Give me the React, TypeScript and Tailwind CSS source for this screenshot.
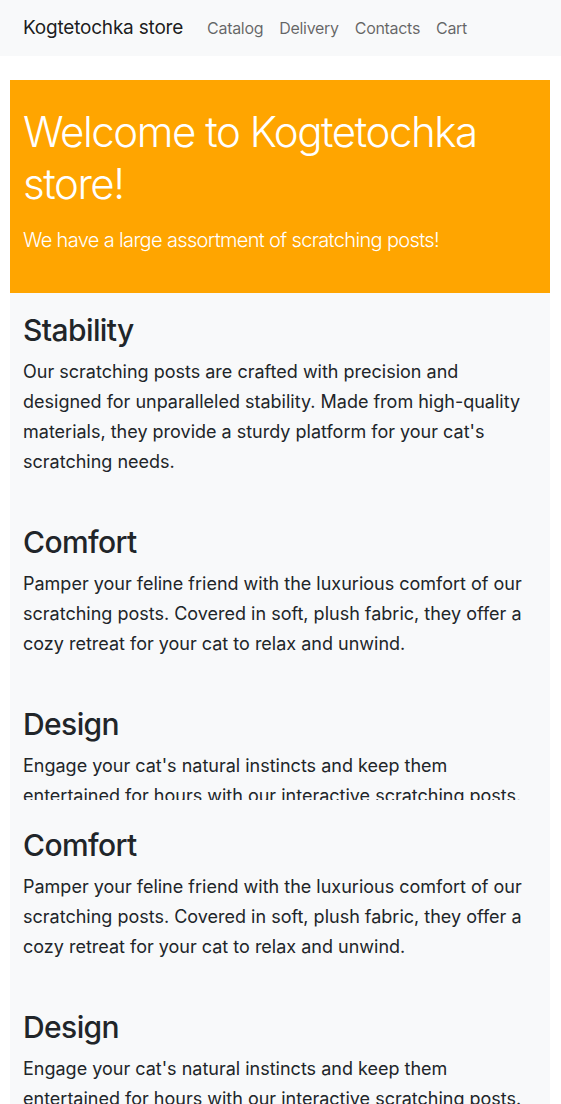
import React from 'react';

const sections = [
  {
    title: 'Stability',
    text: "Our scratching posts are crafted with precision and designed for unparalleled stability. Made from high-quality materials, they provide a sturdy platform for your cat's scratching needs.",
  },
  {
    title: 'Comfort',
    text: 'Pamper your feline friend with the luxurious comfort of our scratching posts. Covered in soft, plush fabric, they offer a cozy retreat for your cat to relax and unwind.',
  },
  {
    title: 'Design',
    text: "Engage your cat's natural instincts and keep them entertained for hours with our interactive scratching posts. Stylish designs blend seamlessly with any home decor.",
  },
];

function Feature({ title, text }: { title: string; text: string }) {
  return (
    <div className="mb-[47px]">
      <h2 className="mb-[9px] text-[30px] font-medium leading-[36px] tracking-[-0.6px] text-[#212529]">{title}</h2>
      <p className="text-[18px] leading-[30px] text-[#212529]">{text}</p>
    </div>
  );
}

export default function App() {
  return (
    <div className="min-h-screen bg-white font-['Inter',sans-serif]">
      {/* Navbar */}
      <nav className="flex h-14 items-center bg-[#f8f9fa] px-[23px]">
        <span className="mr-4 text-[19px] tracking-[-0.2px] text-black/90">Kogtetochka store</span>
        <div className="flex">
          <a href="#" className="px-2 text-[16px] tracking-[-0.3px] text-black/60">Catalog</a>
          <a href="#" className="px-2 text-[16px] tracking-[-0.3px] text-black/60">Delivery</a>
          <a href="#" className="px-2 text-[16px] tracking-[-0.3px] text-black/60">Contacts</a>
          <a href="#" className="px-2 text-[16px] tracking-[-0.3px] text-black/60">Cart</a>
        </div>
      </nav>

      <main className="mx-[10px] mt-6 w-[540px]">
        {/* Jumbotron */}
        <div className="bg-[#ffa500] px-[13px] pb-[22px] pt-[26px] text-white">
          <h1 className="mb-4 text-[42px] font-light leading-[51.6px] tracking-[-1.45px]">Welcome to Kogtetochka store!</h1>
          <p className="mb-4 text-[20px] font-light leading-[30px] tracking-[-0.65px]">We have a large assortment of scratching posts!</p>
        </div>

        {/* Features, first scroller */}
        <div className="h-[507px] overflow-hidden bg-[#f8f9fa] px-[13px] pt-[19px]">
          {sections.map((s) => (
            <Feature key={s.title} {...s} />
          ))}
        </div>

        {/* Features, second scroller */}
        <div className="bg-[#f8f9fa] px-[13px] pt-[27px]">
          {sections.slice(1).map((s) => (
            <Feature key={s.title} {...s} />
          ))}
        </div>
      </main>
    </div>
  );
}
